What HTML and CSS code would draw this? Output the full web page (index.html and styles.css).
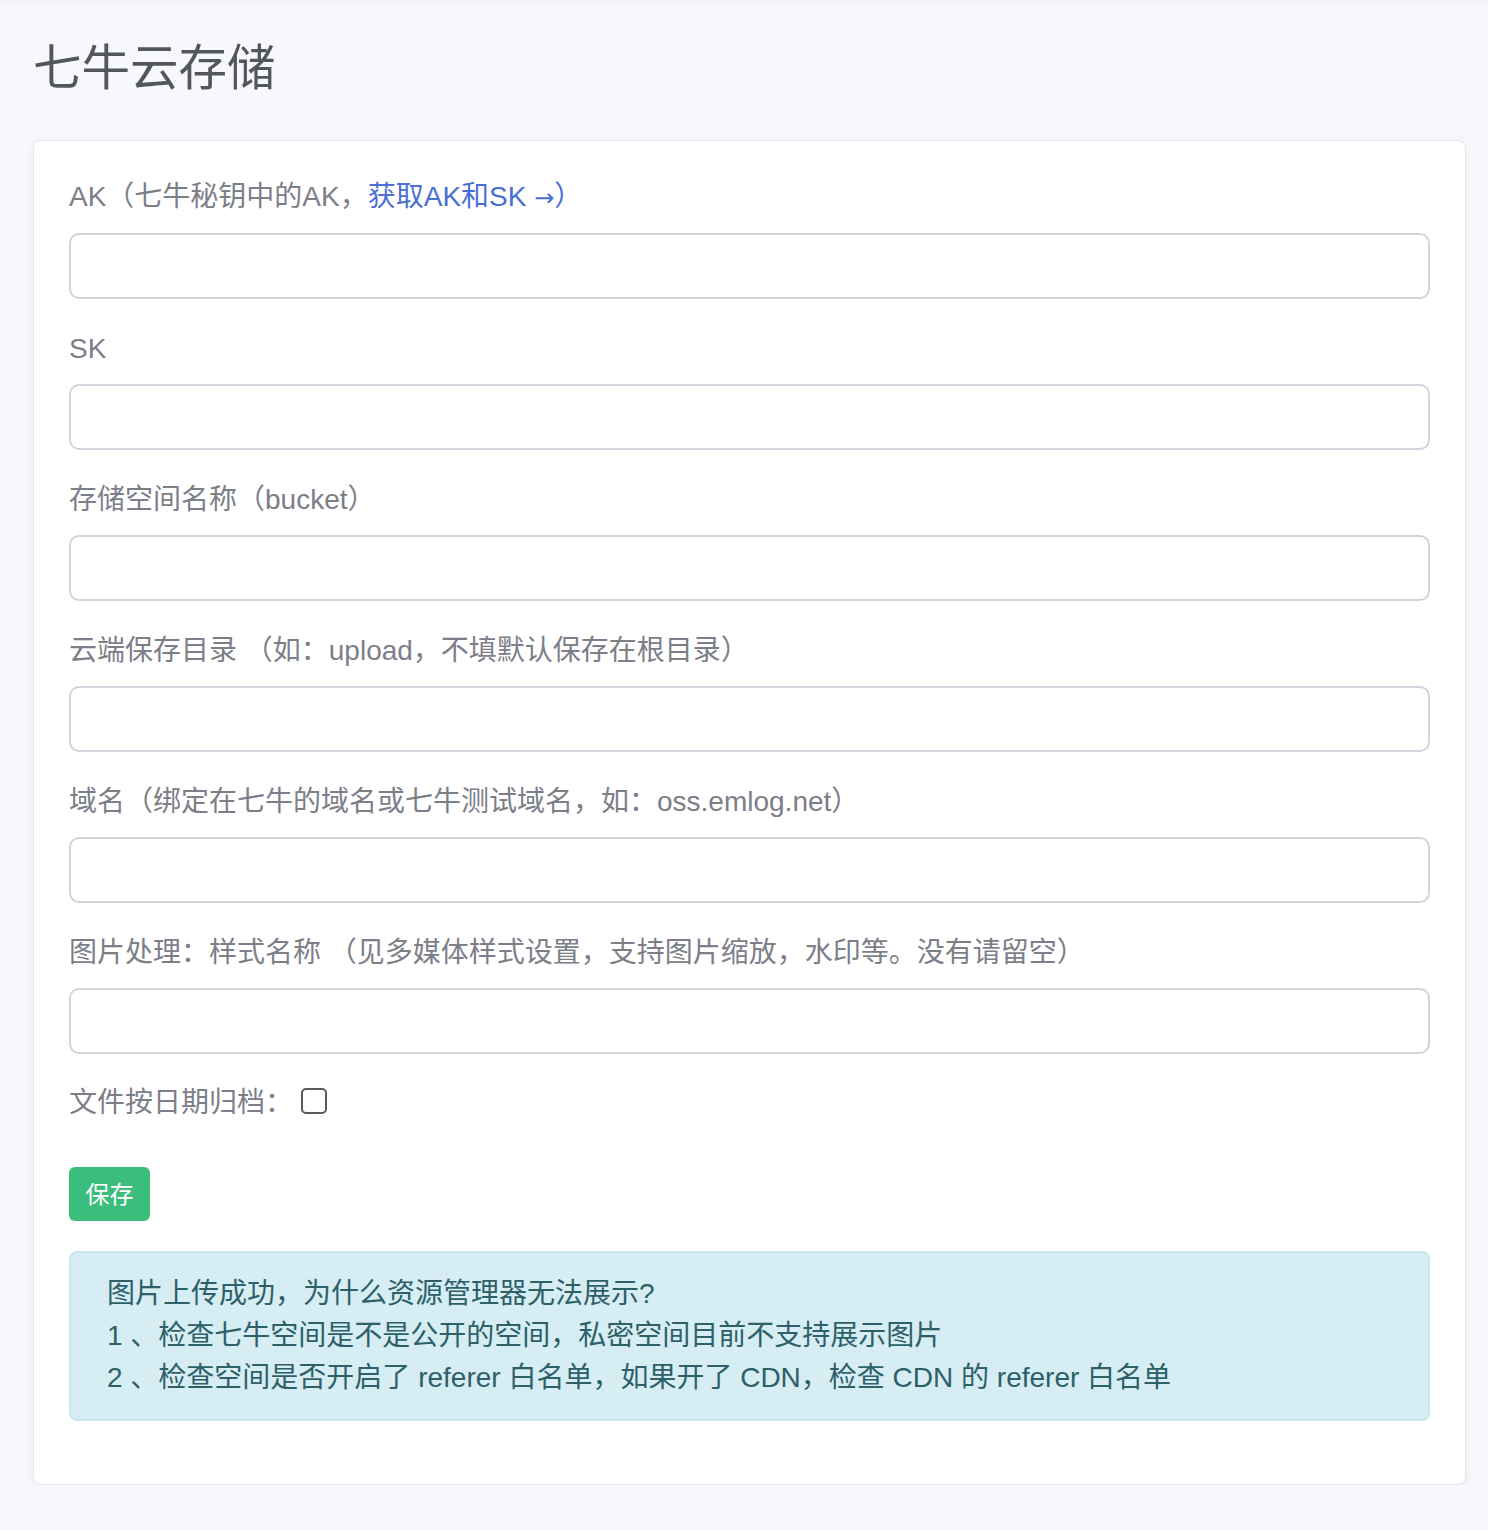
FILE: index.html
```html
<!DOCTYPE html>
<html lang="zh-CN">
<head>
<meta charset="utf-8">
<title>七牛云存储</title>
<link rel="stylesheet" href="styles.css">
</head>
<body>
<div class="topline"></div>
<main class="page">
  <h1 class="title">七牛云存储</h1>
  <section class="card">
    <form class="form">
      <div class="group">
        <label class="label">AK（七牛秘钥中的AK，<a class="link" href="#">获取AK和SK <span class="arrow">→</span>）</a></label>
        <input class="input" type="text">
      </div>
      <div class="group">
        <label class="label">SK</label>
        <input class="input" type="text">
      </div>
      <div class="group">
        <label class="label">存储空间名称（bucket）</label>
        <input class="input" type="text">
      </div>
      <div class="group">
        <label class="label">云端保存目录 （如：upload，不填默认保存在根目录）</label>
        <input class="input" type="text">
      </div>
      <div class="group">
        <label class="label">域名（绑定在七牛的域名或七牛测试域名，如：oss.emlog.net）</label>
        <input class="input" type="text">
      </div>
      <div class="group">
        <label class="label">图片处理：样式名称 （见多媒体样式设置，支持图片缩放，水印等。没有请留空）</label>
        <input class="input" type="text">
      </div>
      <div class="check-row">
        <span class="label inline">文件按日期归档：</span>
        <input class="check" type="checkbox">
      </div>
      <button class="btn" type="button">保存</button>
    </form>
    <div class="alert">
      <p>图片上传成功，为什么资源管理器无法展示?</p>
      <p>1 、检查七牛空间是不是公开的空间，私密空间目前不支持展示图片</p>
      <p>2 、检查空间是否开启了 referer 白名单，如果开了 CDN，检查 CDN 的 referer 白名单</p>
    </div>
  </section>
</main>
</body>
</html>
```
FILE: styles.css
```css
* { box-sizing: border-box; }
html, body {
  margin: 0;
  padding: 0;
  background: #f7f8fb;
  font-family: "Liberation Sans", "Noto Sans CJK SC", sans-serif;
}
.topline {
  height: 6px;
  background: linear-gradient(#eef0f3, #f7f8fb);
}
.page {
  padding: 0 22px 0 33px;
}
.title {
  margin: 33px 0 0 0;
  font-size: 48.5px;
  line-height: 58px;
  font-weight: 400;
  color: #54565e;
  height: 101px;
}
.card {
  background: #fff;
  border: 1px solid #e3e6ee;
  border-radius: 8px;
  box-shadow: 0 2px 10px rgba(58, 59, 69, 0.06);
  padding: 35px;
}
.form {
  display: flex;
  flex-direction: column;
  align-items: flex-start;
}
.group {
  width: 100%;
  margin-bottom: 28px;
  display: flex;
  flex-direction: column;
}
.group:nth-child(n+2) { margin-top: 1px; }
.label {
  font-size: 28px;
  line-height: 42px;
  color: #7c7e88;
  margin-bottom: 14px;
}
.link {
  color: #4a6fd4;
  text-decoration: none;
}
.arrow {
  font-family: "DejaVu Sans", sans-serif;
  font-size: 24px;
}
.input {
  width: 100%;
  height: 66px;
  border: 2px solid #d3d3de;
  border-radius: 10px;
  background: #fff;
  font-size: 28px;
  padding: 0 20px;
}
.check-row {
  display: flex;
  align-items: center;
  height: 42px;
  margin-bottom: 43px;
}
.label.inline { margin-bottom: 0; }
.check {
  appearance: none;
  -webkit-appearance: none;
  width: 26px;
  height: 26px;
  margin: 0 0 4px 8px;
  border: 2px solid #58595e;
  border-radius: 5px;
  background: #fff;
}
.btn {
  width: 81px;
  height: 54px;
  border: none;
  border-radius: 6px;
  background: #3bbd7b;
  color: #fff;
  font-family: "Noto Sans CJK SC", sans-serif;
  font-size: 24px;
  line-height: 52px;
  padding: 0 0 2px;
}
.alert {
  margin-top: 30px;
  margin-bottom: 28px;
  background: #d5edf3;
  border: 2px solid #c6e8ee;
  border-radius: 8px;
  padding: 20px 35px 20px 36px;
  color: #2d6068;
}
.alert p {
  margin: 0;
  font-size: 28px;
  line-height: 42px;
}
```
